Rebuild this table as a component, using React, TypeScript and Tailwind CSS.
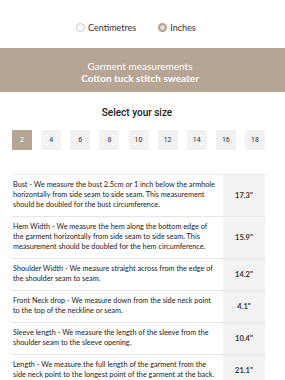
import { useState } from "react";

const SIZES = ["2", "4", "6", "8", "10", "12", "14", "16", "18"];

const ROWS = [
  {
    label: "Bust",
    text: "We measure the bust 2.5cm or 1 inch below the armhole horizontally from side seam to side seam. This measurement should be doubled for the bust circumference.",
    value: "17.3\"",
  },
  {
    label: "Hem Width",
    text: "We measure the hem along the bottom edge of the garment horizontally from side seam to side seam. This measurement should be doubled for the hem circumference.",
    value: "15.9\"",
  },
  {
    label: "Shoulder Width",
    text: "We measure straight across from the edge of the shoulder seam to seam.",
    value: "14.2\"",
  },
  {
    label: "Front Neck drop",
    text: "We measure down from the side neck point to the top of the neckline or seam.",
    value: "4.1\"",
  },
  {
    label: "Sleeve length",
    text: "We measure the length of the sleeve from the shoulder seam to the sleeve opening.",
    value: "10.4\"",
  },
  {
    label: "Length",
    text: "We measure the full length of the garment from the side neck point to the longest point of the garment at the back.",
    value: "21.1\"",
  },
];

function Radio({ label, checked, onClick }: { label: string; checked: boolean; onClick: () => void }) {
  return (
    <button type="button" onClick={onClick} className="flex items-center gap-[3px]">
      <span
        className={
          checked
            ? "size-[9px] rounded-full border-[2.5px] border-[#b3a191] bg-[#e6ddd5]"
            : "size-[9px] rounded-full border border-[#c9c9c9] bg-white"
        }
      />
      <span className="text-[9px] leading-none text-[#333]">{label}</span>
    </button>
  );
}

export default function App() {
  const [unit, setUnit] = useState<"cm" | "in">("in");
  const [size, setSize] = useState("2");

  return (
    <div className="h-[380px] w-[285px] overflow-hidden bg-white font-['Lato',sans-serif]">
      <div className="flex h-[48px] items-center gap-[22px] pt-[6px] pl-[76px]">
        <Radio label="Centimetres" checked={unit === "cm"} onClick={() => setUnit("cm")} />
        <Radio label="Inches" checked={unit === "in"} onClick={() => setUnit("in")} />
      </div>

      <div className="flex h-[44px] flex-col items-center justify-center bg-[#b6a595] pt-[5px] pr-[5px] text-[10px] leading-[11.5px] text-white">
        <p>Garment measurements</p>
        <p className="font-bold">Cotton tuck stitch sweater</p>
      </div>

      <div className="ml-[12px] w-[253px]">
        <h2 className="pt-[14px] pr-[3px] text-center font-['Roboto',sans-serif] text-[10px] font-medium leading-[14px] text-[#222]">
          Select your size
        </h2>
        <div className="mt-[10px] flex justify-between">
          {SIZES.map((s) => (
            <button
              key={s}
              type="button"
              onClick={() => setSize(s)}
              className={
                s === size
                  ? "flex size-[20px] items-center justify-center bg-[#b6a595] font-['Roboto',sans-serif] text-[7px] text-white"
                  : "flex size-[20px] items-center justify-center bg-[#f2f2f2] font-['Roboto',sans-serif] text-[7px] text-[#333]"
              }
            >
              {s}
            </button>
          ))}
        </div>

        <table className="mt-[24px] w-full border-collapse border-t border-[#ececec]">
          <tbody>
            {ROWS.map((r) => (
              <tr key={r.label} className="border-b border-[#e6e6e6]">
                <td className="pt-[5px] pr-[4px] pb-[6px] pl-[1px] align-middle text-[7.3px] leading-[10px] text-[#222]">
                  {r.label} - {r.text}
                </td>
                <td className="w-[42px] bg-[#f3f3f3] text-center align-middle text-[7.5px] font-bold text-[#333]">
                  {r.value}
                </td>
              </tr>
            ))}
          </tbody>
        </table>
      </div>
    </div>
  );
}
